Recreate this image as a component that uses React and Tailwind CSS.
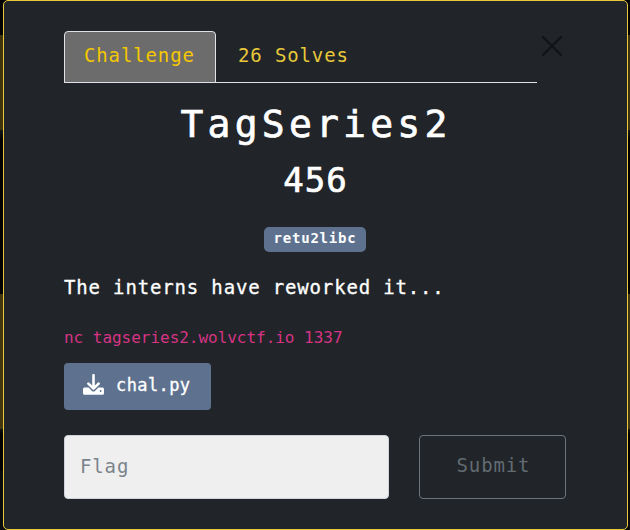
function Tabs() {
  return (
    <div className="flex h-[52px] w-[473px] border-b border-[#dee2e6] text-[19px] leading-[30px] tracking-[0.87px]">
      <div className="-mb-px h-[52px] w-[152px] rounded-t-[4px] border border-[#dee2e6] bg-[#6c6c6c] pt-[8px] pl-[19px] text-[#f5c800]">
        Challenge
      </div>
      <div className="pt-[9px] pl-[22px] text-[#e8c83a]">26 Solves</div>
    </div>
  );
}

function CloseIcon() {
  return (
    <svg className="mt-[5px] ml-[5px] size-5" viewBox="0 0 20 20" fill="none" stroke="#111315" strokeWidth="2.2" strokeLinecap="round">
      <path d="M1 1 19 19M19 1 1 19" />
    </svg>
  );
}

function DownloadIcon() {
  return (
    <svg className="mr-[12px] mb-[4px] h-[21px] w-[21px]" viewBox="0 0 21 21">
      <path
        d="M1.5 13.5H5.6L9 16.9Q10.5 18.2 12 16.9L15.4 13.5H19.5Q21 13.5 21 15V19.2Q21 20.7 19.5 20.7H1.5Q0 20.7 0 19.2V15Q0 13.5 1.5 13.5Z"
        fill="#fff"
      />
      <path d="M10.5 1.2V14.4M5.4 9.6 10.5 14.6 15.6 9.6" fill="none" stroke="#fff" strokeWidth="2.6" strokeLinecap="round" strokeLinejoin="round" />
      <circle cx="17.6" cy="17" r="0.9" fill="#5e7290" />
    </svg>
  );
}

export default function App() {
  return (
    <div className="flex h-[530px] w-[630px] overflow-hidden bg-[linear-gradient(to_bottom,#020202_35px,#40340f_35px,#40340f_130px,#15181a_130px,#000_140px,#000_294px,#43370f_294px,#43370f_429px,#151515_429px,#000_434px,#000_470px,#0a0b0c_471px)] font-['DejaVu_Sans_Mono',monospace]">
      <div className="ml-[3px] h-[530px] w-[625px] shrink-0 rounded-[5px] border border-[#e9c93b] bg-[#212529] pt-[30px] pl-[60px] text-white">
        <div className="flex">
          <Tabs />
          <CloseIcon />
        </div>
        <div className="w-[502px]">
          <h2 className="mt-[18px] pl-[2px] text-center text-[38px] leading-[46px] tracking-[4.23px] [-webkit-text-stroke:0.7px_white]">
            TagSeries2
          </h2>
          <h3 className="mt-[12px] pl-px text-center text-[34px] leading-[42px] tracking-[1px] [-webkit-text-stroke:0.7px_white]">456</h3>
          <div className="mt-[26px] flex justify-center">
            <span className="h-[25px] w-[102px] rounded-[5px] bg-[#5e7290] text-center text-[14px] leading-[23px] font-bold tracking-[0.8px]">
              retu2libc
            </span>
          </div>
          <p className="mt-[20px] text-[19px] leading-[30px] tracking-[0.84px] whitespace-nowrap [-webkit-text-stroke:0.3px_white]">
            The interns have reworked it...
          </p>
          <code className="mt-[24px] block font-['DejaVu_Sans_Mono',monospace] text-[16px] leading-[24px] tracking-[-0.03px] whitespace-nowrap text-[#d63384]">
            nc tagseries2.wolvctf.io 1337
          </code>
          <div className="mt-[13px] flex h-[47px] w-[147px] items-center rounded-[4px] bg-[#5e7290] pl-[19px] text-[17px] tracking-[0.4px]">
            <DownloadIcon />
            <span className="mb-[2px] [-webkit-text-stroke:0.3px_white]">chal.py</span>
          </div>
          <div className="mt-[25px] flex gap-[30px]">
            <input
              placeholder="Flag"
              className="h-[64px] w-[325px] rounded-[4px] border border-[#ced4da] bg-[#efefef] pr-4 pb-[3px] pl-[15px] text-[19px] tracking-[0.87px] placeholder:text-[#7b848c]"
            />
            <button className="h-[64px] w-[147px] rounded-[4px] border border-[#6c757d] pb-[3px] pl-[2px] text-[19px] tracking-[0.87px] text-[#626b72]">
              Submit
            </button>
          </div>
        </div>
      </div>
    </div>
  );
}
